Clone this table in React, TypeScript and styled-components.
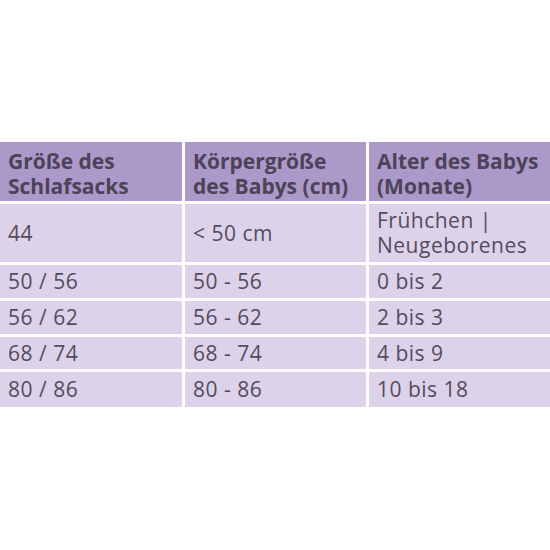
import React from 'react';
import styled, { createGlobalStyle } from 'styled-components';

const GlobalStyle = createGlobalStyle`
  html, body {
    margin: 0;
    padding: 0;
    background: #ffffff;
  }
`;

const rows: [string, string, string][] = [
  ['44', '< 50 cm', 'Frühchen | Neugeborenes'],
  ['50 / 56', '50 - 56', '0 bis 2'],
  ['56 / 62', '56 - 62', '2 bis 3'],
  ['68 / 74', '68 - 74', '4 bis 9'],
  ['80 / 86', '80 - 86', '10 bis 18'],
];

const App: React.FC = () => {
  return (
    <Page>
      <GlobalStyle />
      <SizeTable>
        <HeadCell>Größe des<br />Schlafsacks</HeadCell>
        <HeadCell>Körpergröße<br />des Babys (cm)</HeadCell>
        <HeadCell>Alter des Babys<br />(Monate)</HeadCell>
        {rows.map((row) =>
          row.map((value, i) => (
            <BodyCell key={row[0] + i}>
              {value === 'Frühchen | Neugeborenes' ? (
                <>Frühchen |<br />Neugeborenes</>
              ) : (
                value
              )}
            </BodyCell>
          ))
        )}
      </SizeTable>
    </Page>
  );
};

export default App;

// Styled Components

const Page = styled.div`
  width: 550px;
  height: 550px;
  padding-top: 142px;
  box-sizing: border-box;
  font-family: 'Open Sans', 'Noto Sans', sans-serif;
`;

const SizeTable = styled.div`
  display: grid;
  grid-template-columns: 182px 181px 181px;
  grid-template-rows: 59px 58px 33px 33px 32px 35px;
  column-gap: 3px;
  row-gap: 3px;
  width: 550px;
`;

const Cell = styled.div`
  display: flex;
  align-items: center;
  padding: 0 8px;
  font-size: 21px;
  line-height: 25px;
`;

const HeadCell = styled(Cell)`
  padding-top: 5px;
  background: #ab99c9;
  color: #4d4358;
  font-weight: 700;
  letter-spacing: 0;
`;

const BodyCell = styled(Cell)`
  background: #dcd3ea;
  color: #554b5e;
  font-weight: 400;
  letter-spacing: 0.5px;
`;
